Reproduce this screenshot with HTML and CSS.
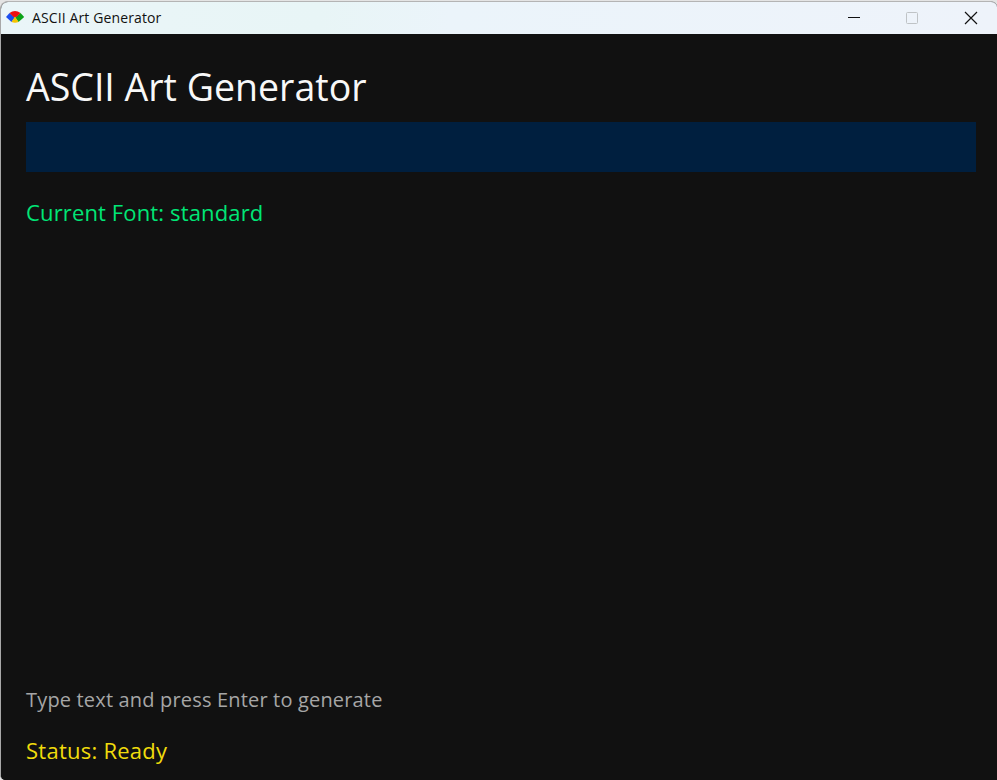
FILE: index.html
```html
<!DOCTYPE html>
<html lang="en">
<head>
<meta charset="utf-8">
<title>ASCII Art Generator</title>
<link rel="stylesheet" href="styles.css">
</head>
<body>
<div class="window">
  <header class="titlebar">
    <svg class="logo" width="20" height="16" viewBox="0 0 20 16">
      <path d="M1 7L4.500 3L10 7.500L6.500 12Z" fill="#1b4ff0"/>
      <path d="M15.500 3L19.200 7L13.500 12L10 7.500Z" fill="#0ba318"/>
      <path d="M4.500 3Q10 -1 15.500 3L11.500 7H8.500Z" fill="#f01010"/>
      <path d="M10 6.500L13.500 12Q10 13.500 6.500 12Z" fill="#f5c400"/>
    </svg>
    <span class="caption">ASCII Art Generator</span>
    <svg class="controls" width="140" height="32" viewBox="0 0 140 32" fill="none">
      <path d="M5 15.500H17" stroke="#111"/>
      <rect x="63.500" y="10.500" width="11" height="11" rx="1" stroke="#bfc3c6"/>
      <path d="M122 10L134 22M134 10L122 22" stroke="#111" stroke-width="1.2"/>
    </svg>
  </header>
  <main class="content">
    <h1 class="heading">ASCII Art Generator</h1>
    <div class="field"></div>
    <p class="font-name">Current Font: standard</p>
    <p class="hint">Type text and press Enter to generate</p>
    <p class="status">Status: Ready</p>
  </main>
</div>
</body>
</html>
```
FILE: styles.css
```css
* { box-sizing: border-box; }
body { margin: 0; padding-top: 1px; background: #e4e4e4; font-family: "Open Sans", sans-serif; }
.window { width: 997px; height: 779px; border-left: 1px solid #a8a8a8; border-top: 1px solid #b4b4b4; border-radius: 8px 6px 0 5px; overflow: hidden; display: flex; flex-direction: column; background: #111; }
.titlebar { height: 32px; display: flex; align-items: center; background: linear-gradient(90deg, #eaf5f8, #e8f5f6 32%, #ebf4fa 45%, #eef3fa); padding-left: 4px; }
.logo { margin-bottom: 1px; }
.caption { margin: 0 0 2px 7px; font-size: 14px; letter-spacing: 0.12px; color: #111; }
.controls { margin-left: auto; margin-right: 14px; }
.content { flex: 1; display: flex; flex-direction: column; background: #111; padding: 25px 21px 14px 25px; }
.heading { margin: 0; font-size: 37.5px; font-weight: 400; line-height: 56px; color: #f8f8f8; }
.field { height: 50px; margin-top: 7px; background: #001f3f; }
.font-name { margin: 24px 0 0; font-size: 22px; letter-spacing: 0.14px; line-height: 32px; color: #00e676; }
.hint { margin: auto 0 0; font-size: 20px; letter-spacing: 0.17px; line-height: 30px; color: #a6a6a6; }
.status { margin: 19px 0 0; font-size: 22px; letter-spacing: 0.25px; line-height: 32px; color: #f0dc0c; }
```
